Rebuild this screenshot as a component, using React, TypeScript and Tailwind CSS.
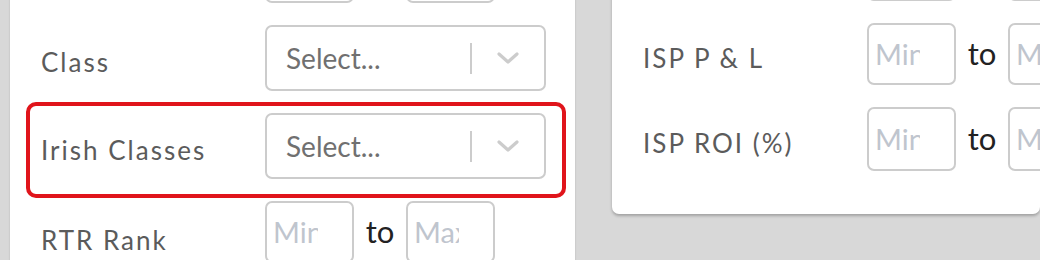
import React from "react";

const font = { fontFamily: "Lato, 'Noto Sans', sans-serif" };

function Chevron() {
  return (
    <svg width="22" height="12" viewBox="0 0 22 12" fill="none">
      <path d="M2 2 L11 10 L20 2" stroke="#cccccc" strokeWidth="3.2" strokeLinecap="round" strokeLinejoin="round" />
    </svg>
  );
}

function SelectBox() {
  return (
    <div className="flex h-[66px] w-[281px] shrink-0 items-center rounded-[7px] border-2 border-[#cccccc] bg-white">
      <div className="flex-1 pl-[19px] text-[28px] text-[#707070]">Select...</div>
      <div className="h-[31px] w-[2px] bg-[#cccccc]" />
      <div className="flex w-[72px] justify-center">
        <Chevron />
      </div>
    </div>
  );
}

function NumBox({ ph, h = "h-[62px]" }: { ph: string; h?: string }) {
  return (
    <div className={`flex ${h} w-[89px] shrink-0 items-center overflow-hidden rounded-[7px] border-2 border-[#cccccc] bg-white pl-[6px]`}>
      <div className="w-[45px] overflow-hidden whitespace-nowrap text-[29px] text-[#bfc5ce]">{ph}</div>
    </div>
  );
}

function RangeRow({ h }: { h?: string }) {
  return (
    <div className="flex items-center">
      <NumBox ph="Min" h={h} />
      <div className="w-[52px] pb-[2px] text-center text-[31px] text-[#222222]">to</div>
      <NumBox ph="Max" h={h} />
    </div>
  );
}

function Label({ children }: { children: React.ReactNode }) {
  return (
    <div className="w-[224px] shrink-0 pt-[9px] text-[26px] tracking-[2px] text-[#5b5b5b]">{children}</div>
  );
}

export default function App() {
  return (
    <div className="h-[260px] w-[1040px] overflow-hidden bg-[#d8d8d8]" style={font}>
      <div className="flex items-start pl-[10px]">
        {/* Left panel */}
        <div className="-mt-[58px] h-[400px] w-[565px] shrink-0 bg-white pl-[31px] shadow-[0_0_2px_rgba(0,0,0,0.15)]">
          <div className="flex flex-col gap-[22px]">
            <div className="flex items-center">
              <Label>Start</Label>
              <RangeRow h="h-[61px]" />
            </div>
            <div className="flex items-center">
              <Label>Class</Label>
              <SelectBox />
            </div>
            <div className="relative flex items-center">
              <div className="pointer-events-none absolute -bottom-[19px] -left-[15px] -top-[11px] right-[9px] rounded-[10px] border-4 border-[#e0141b]" />
              <Label>Irish Classes</Label>
              <SelectBox />
            </div>
            <div className="flex items-center">
              <div className="-mb-[8px]">
                <Label>RTR Rank</Label>
              </div>
              <RangeRow />
            </div>
          </div>
        </div>
        {/* Right panel */}
        <div className="-mt-[61px] ml-[37px] h-[275px] min-w-0 flex-1 rounded-b-[7px] bg-white pl-[31px] shadow-[0_2px_3px_rgba(0,0,0,0.25)]">
          <div className="flex flex-col gap-[22px]">
            <div className="flex items-center">
              <Label>X</Label>
              <RangeRow />
            </div>
            <div className="flex items-center">
              <Label>ISP P &amp; L</Label>
              <RangeRow />
            </div>
            <div className="flex items-center">
              <Label>ISP ROI (%)</Label>
              <RangeRow h="h-[64px]" />
            </div>
          </div>
        </div>
      </div>
    </div>
  );
}
